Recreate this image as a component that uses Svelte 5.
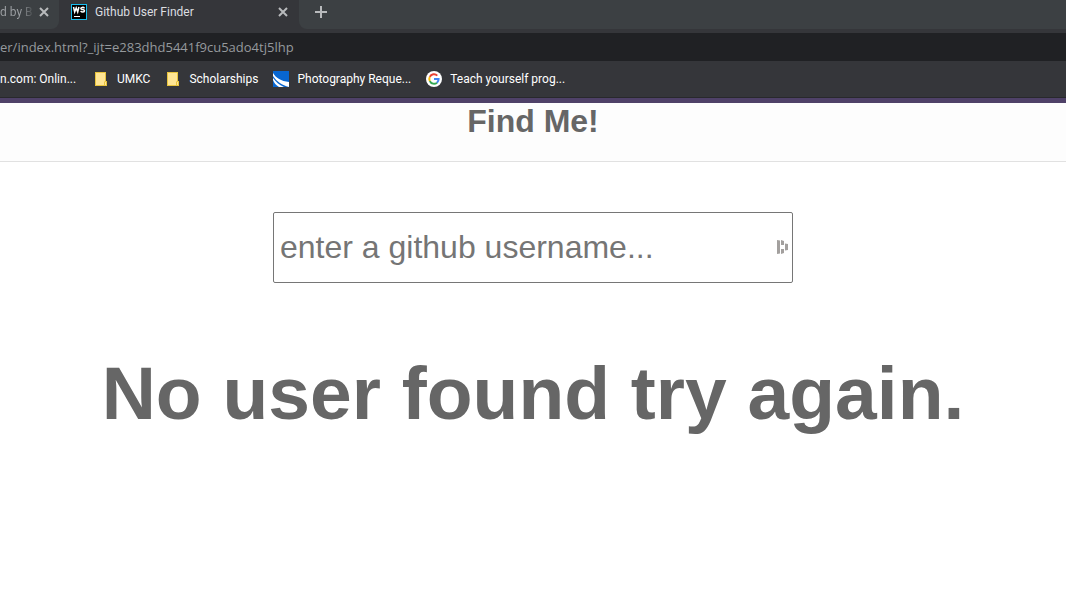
<script>
  let username = $state('');
</script>

<div class="browser">
  <div class="tabs">
    <div class="tab previous">
      <span class="fade">d by B</span>
      <button aria-label="Close previous tab">
        <svg width="10" height="10" viewBox="0 0 10 10"><path d="M1 1l8 8M9 1L1 9" /></svg>
      </button>
    </div>
    <div class="tab active">
      <svg width="16" height="16" viewBox="0 0 16 16" aria-hidden="true">
        <path fill="#19bdf0" d="M0 0h16v16H0z" />
        <path fill="#000" d="M1 1h14v14H1z" />
        <path class="mark" d="M2.500 3l1.200 5 1.500-4 1.500 4 1.200-5M13.500 4.300c-1-1.500-3.800-1-3.600.3.200 1.400 3.600.6 3.600 2.200 0 1.500-2.800 1.600-3.900.3" />
        <path fill="#fff" d="M3 12h6v1H3z" />
      </svg>
      <span class="title">Github User Finder</span>
      <button aria-label="Close tab">
        <svg width="10" height="10" viewBox="0 0 10 10"><path d="M1 1l8 8M9 1L1 9" /></svg>
      </button>
    </div>
    <div class="rest">
      <button aria-label="New tab">
        <svg width="12" height="12" viewBox="0 0 12 12"><path d="M6 0v12M0 6h12" /></svg>
      </button>
    </div>
  </div>
  <div class="address">er/index.html?_ijt=e283dhd5441f9cu5ado4tj5lhp</div>
  <nav class="bookmarks" aria-label="Bookmarks">
    <a class="first" href="#online">n.com: Onlin...</a>
    {#each ['UMKC', 'Scholarships'] as folder}
      <a href="#{folder}">
        <svg width="16" height="16" viewBox="0 0 16 16" aria-hidden="true">
          <path fill="#e8c33c" d="M2 1h11v9h1v5H2z" />
          <path fill="#ffe594" d="M3 2h9v8l-1 1v3H3zM12 11h1v3h-1z" />
        </svg>
        {folder}
      </a>
    {/each}
    <a href="#photography">
      <svg width="16" height="16" viewBox="0 0 16 16" aria-hidden="true">
        <path fill="#0866d0" d="M0 0h16v16H0z" />
        <path fill="#fff" d="M0 2c3 5 8 8 16 9v5C9 14 4 11 0 5z" />
        <path fill="#fff" d="M0 7c3 4 6 7 11 9H6C3 14 1 12 0 9z" />
      </svg>
      Photography Reque...
    </a>
    <a href="#teach">
      <svg width="16" height="16" viewBox="0 0 16 16" aria-hidden="true">
        <circle cx="8" cy="8" r="8" fill="#fff" />
        <g fill="none" stroke-width="2">
          <path stroke="#ea4335" d="M11.300 4.600A4.700 4.700 0 0 0 3.800 5.900" />
          <path stroke="#fbbc05" d="M3.800 5.900a4.700 4.700 0 0 0 0 4.200" />
          <path stroke="#34a853" d="M3.800 10.100a4.700 4.700 0 0 0 7.200 1.600" />
          <path stroke="#4285f4" d="M11 11.700A4.700 4.700 0 0 0 12.600 8H8" />
        </g>
      </svg>
      Teach yourself prog...
    </a>
  </nav>
</div>

<header><h1>Find Me!</h1></header>

<main>
  <div class="search">
    <input type="text" aria-label="Github username" placeholder="enter a github username..." bind:value={username} />
    <svg width="12" height="16" viewBox="0 0 12 16" aria-hidden="true">
      <path fill="#a3a09e" d="M1 1l3 .5v13L1 15zM5 1l3 1v4H5zM5 10h3v4l-3 1zM9 4.500l3 .5v6l-3 .5z" />
    </svg>
  </div>
  <h2>No user found try again.</h2>
</main>

<style>
  :global(body) {
    margin: 0;
    background: #fff;
    color: #666;
    font-family: "Liberation Sans", Arial, sans-serif;
  }
  .browser {
    background: #35363a;
    border-bottom: 1px solid #28292c;
    font-family: Roboto, "Segoe UI", sans-serif;
    font-size: 12px;
    color: #fff;
    white-space: nowrap;
  }
  .browser svg { display: block; flex: none; }
  button {
    padding: 0;
    border: 0;
    background: none;
  }
  button path {
    fill: none;
    stroke: #b8babc;
    stroke-width: 2;
  }
  .tabs {
    display: flex;
    height: 29px;
    line-height: 24px;
    margin-bottom: 4px;
  }
  .tab {
    display: flex;
    box-sizing: border-box;
    align-items: center;
    padding-bottom: 5px;
  }
  .previous {
    width: 59px;
    padding-right: 10px;
    justify-content: space-between;
    background: #3c4043;
    border-bottom-right-radius: 8px;
  }
  .fade {
    color: transparent;
    background: linear-gradient(90deg, #9da0a4 60%, #4a4e51);
    background-clip: text;
  }
  .active {
    width: 240px;
    padding-left: 12px;
    padding-right: 11px;
    color: #dcdee0;
  }
  .title { flex: 1; margin-left: 8px; }
  .mark { fill: none; stroke: #fff; stroke-width: 1.5; }
  .rest {
    display: flex;
    flex: 1;
    align-items: center;
    padding: 0 0 5px 16px;
    background: #3c4043;
    border-bottom-left-radius: 8px;
  }
  .address {
    height: 28px;
    line-height: 28px;
    background: #202124;
    color: #95999d;
    font-family: "Open Sans", "Segoe UI", sans-serif;
    font-size: 13px;
  }
  .bookmarks {
    display: flex;
    align-items: center;
    gap: 15px;
    height: 36px;
  }
  .bookmarks a {
    display: flex;
    align-items: center;
    gap: 8px;
    color: #fff;
    text-decoration: none;
  }
  .bookmarks .first { width: 78px; }
  header {
    box-sizing: border-box;
    height: 64px;
    border-top: 5px solid #4f4168;
    border-bottom: 1px solid #e1e1e1;
    background: #fdfdfd;
    text-align: center;
  }
  h1 {
    margin: 0;
    font-size: 32px;
    line-height: 36px;
  }
  main {
    display: flex;
    flex-direction: column;
    align-items: center;
    padding-top: 50px;
  }
  .search {
    position: relative;
    width: 520px;
    max-width: 100%;
  }
  input {
    box-sizing: border-box;
    display: block;
    width: 100%;
    height: 71px;
    padding: 0 6px;
    border: 1px solid #767676;
    border-radius: 2px;
    background: #fff;
    color: #666;
    font: 32px "Liberation Sans", Arial, sans-serif;
  }
  input::placeholder { color: #757575; opacity: 1; }
  .search svg {
    position: absolute;
    right: 5px;
    top: 27px;
  }
  h2 {
    margin: 66px 0 0;
    font-size: 75px;
    line-height: 88px;
    text-align: center;
  }
</style>
